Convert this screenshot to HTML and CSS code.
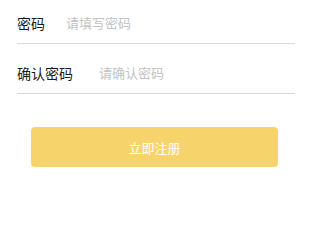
FILE: index.html
```html
<!DOCTYPE html>
<html lang="zh-CN">
<head>
    <meta charset="UTF-8">
    <meta name="viewport" content="width=device-width, initial-scale=1.0">
    <title>注册</title>
    <link rel="stylesheet" href="styles.css">
</head>
<body>
    <div class="form">
        <div class="field">
            <span class="label">密码</span>
            <input class="input" type="password" placeholder="请填写密码">
        </div>
        <div class="field">
            <span class="label label-long">确认密码</span>
            <input class="input" type="password" placeholder="请确认密码">
        </div>
    </div>
    <div class="btn-wrap">
        <button class="btn">立即注册</button>
    </div>
</body>
</html>
```

FILE: styles.css
```css
body, html {
    margin: 0;
    padding: 0;
    background-color: white;
    font-family: "Noto Sans CJK SC", "Noto Sans", sans-serif;
}
.form {
    margin: 0 14px 0 17px;
}
.field {
    display: flex;
    align-items: center;
    height: 20px;
    padding: 19px 0 10px;
    border-bottom: 1px solid #d9d9d9;
}
.field:first-child {
    padding-top: 13px;
}
.label {
    font-size: 14px;
    line-height: 20px;
    color: #1a1a1a;
    margin-right: 21px;
    white-space: nowrap;
}
.label-long {
    margin-right: 26px;
}
.input {
    flex: 1;
    min-width: 0;
    border: none;
    outline: none;
    padding: 0;
    font-family: inherit;
    font-size: 13px;
    line-height: 20px;
    color: #333;
    background: transparent;
}
.input::placeholder {
    color: #c2c2c2;
}
.btn-wrap {
    padding: 33px 31px 0;
}
.btn {
    display: block;
    width: 100%;
    height: 40px;
    border: none;
    border-radius: 4px;
    background-color: #f7d46b;
    color: white;
    font-family: inherit;
    font-size: 13px;
}
```
